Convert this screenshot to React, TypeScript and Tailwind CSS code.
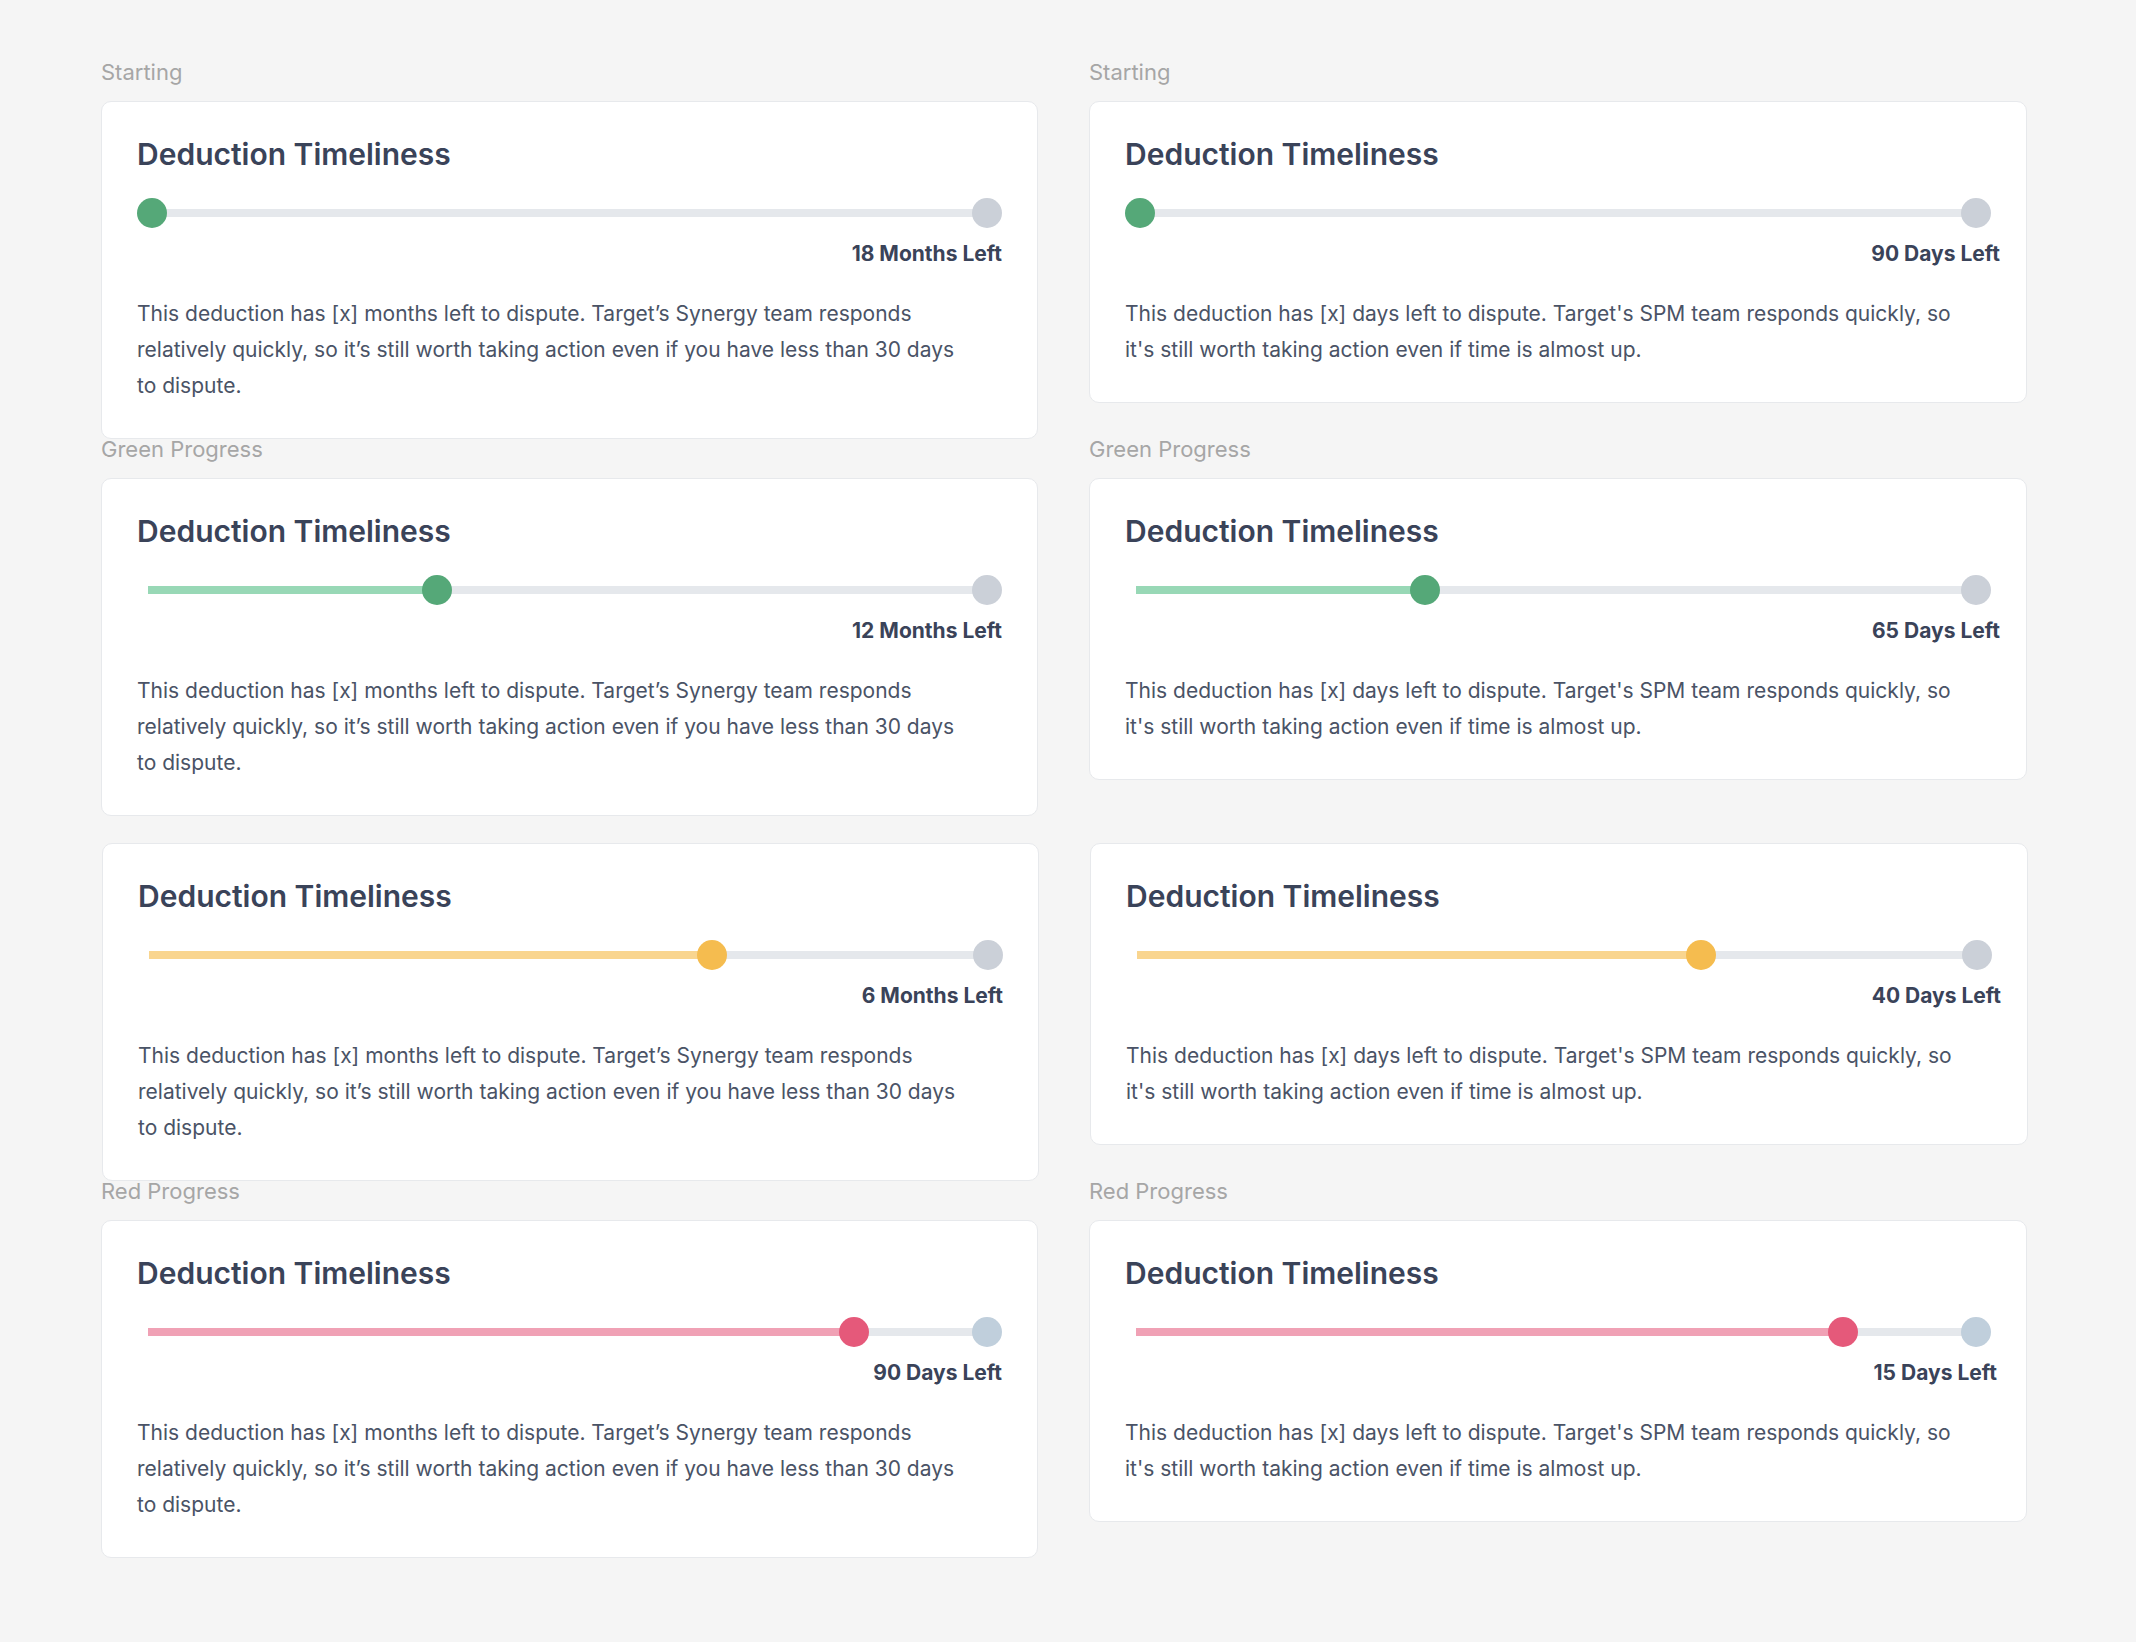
import React from 'react'

type Tone = 'green' | 'yellow' | 'red'

const tones: Record<Tone, { dot: string; fill: string; end: string }> = {
  green:  { dot: 'bg-[#55a878]', fill: 'bg-[#98d8b6]', end: 'bg-[#cbd0d8]' },
  yellow: { dot: 'bg-[#f5bc4f]', fill: 'bg-[#f9d58f]', end: 'bg-[#cbd0d8]' },
  red:    { dot: 'bg-[#e5597a]', fill: 'bg-[#f0a1b5]', end: 'bg-[#c0cfdc]' },
}

const MONTHS_COPY =
  'This deduction has [x] months left to dispute. Target’s Synergy team responds relatively quickly, so it’s still worth taking action even if you have less than 30 days to dispute.'
const DAYS_COPY =
  "This deduction has [x] days left to dispute. Target's SPM team responds quickly, so it's still worth taking action even if time is almost up."

interface Row {
  label: string | null
  tone: Tone
  progress: number
  months: string
  days: string
}

const rows: Row[] = [
  { label: 'Starting',       tone: 'green',  progress: 0,     months: '18 Months Left', days: '90 Days Left' },
  { label: 'Green Progress', tone: 'green',  progress: 0.341, months: '12 Months Left', days: '65 Days Left' },
  { label: null,             tone: 'yellow', progress: 0.67,  months: '6 Months Left',  days: '40 Days Left' },
  { label: 'Red Progress',   tone: 'red',    progress: 0.841, months: '90 Days Left',   days: '15 Days Left' },
]

function Slider({ tone, progress }: { tone: Tone; progress: number }) {
  const t = tones[tone]
  return (
    <div className="relative h-[30px]">
      <div className="absolute left-[11px] right-[11px] top-[11px] h-[8px] bg-[#e5e8ec]" />
      {progress > 0 && (
        <div
          className={`absolute left-[11px] top-[11px] h-[8px] ${t.fill}`}
          style={{ width: `calc(${progress} * (100% - 30px) + 4px)` }}
        />
      )}
      <div className={`absolute right-0 top-0 size-[30px] rounded-full ${t.end}`} />
      <div
        className={`absolute top-0 size-[30px] rounded-full ${t.dot}`}
        style={{ left: `calc(${progress} * (100% - 30px))` }}
      />
    </div>
  )
}

function Card({ tone, progress, left, copy, overhang, shifted }: {
  tone: Tone; progress: number; left: string; copy: string; overhang: string; shifted: boolean
}) {
  return (
    <div className={`rounded-[10px] border border-[#e7e9ec] bg-white px-[35px] pt-[34px] pb-[34px] ${shifted ? 'ml-px -mr-px' : ''}`}>
      <h2 className="text-[30px] leading-[36px] font-semibold text-[#3a4359]">Deduction Timeliness</h2>
      <div className="mt-[26px]">
        <Slider tone={tone} progress={progress} />
      </div>
      <div className={`mt-[12px] flex justify-end ${overhang}`}>
        <span className="text-[21px] leading-[28px] font-bold text-[#3a4359]">{left}</span>
      </div>
      <p className="mt-7 max-w-[840px] text-[21px] leading-[36px] text-[#4a5366]">{copy}</p>
    </div>
  )
}

export default function App() {
  return (
    <div className="min-h-screen bg-[#f5f5f5] pt-[62px] pl-[101px] font-[Inter,sans-serif]">
      <div className="grid grid-cols-[937px_938px] gap-x-[51px]">
        {rows.map((r, i) => (
          <React.Fragment key={i}>
            {[0, 1].map(col => (
              <div key={col} className={r.label ? '' : 'pt-[27px]'}>
                {r.label && (
                  <div className="mb-[19px] text-[22px] leading-5 text-[#a6a6a6]">{r.label}</div>
                )}
                <Card
                  tone={r.tone}
                  progress={r.progress}
                  left={col === 0 ? r.months : r.days}
                  copy={col === 0 ? MONTHS_COPY : DAYS_COPY}
                  overhang={col === 0 ? '' : r.tone === 'red' ? '-mr-[6px]' : '-mr-[9px]'}
                  shifted={r.tone === 'yellow'}
                />
              </div>
            ))}
          </React.Fragment>
        ))}
      </div>
    </div>
  )
}
